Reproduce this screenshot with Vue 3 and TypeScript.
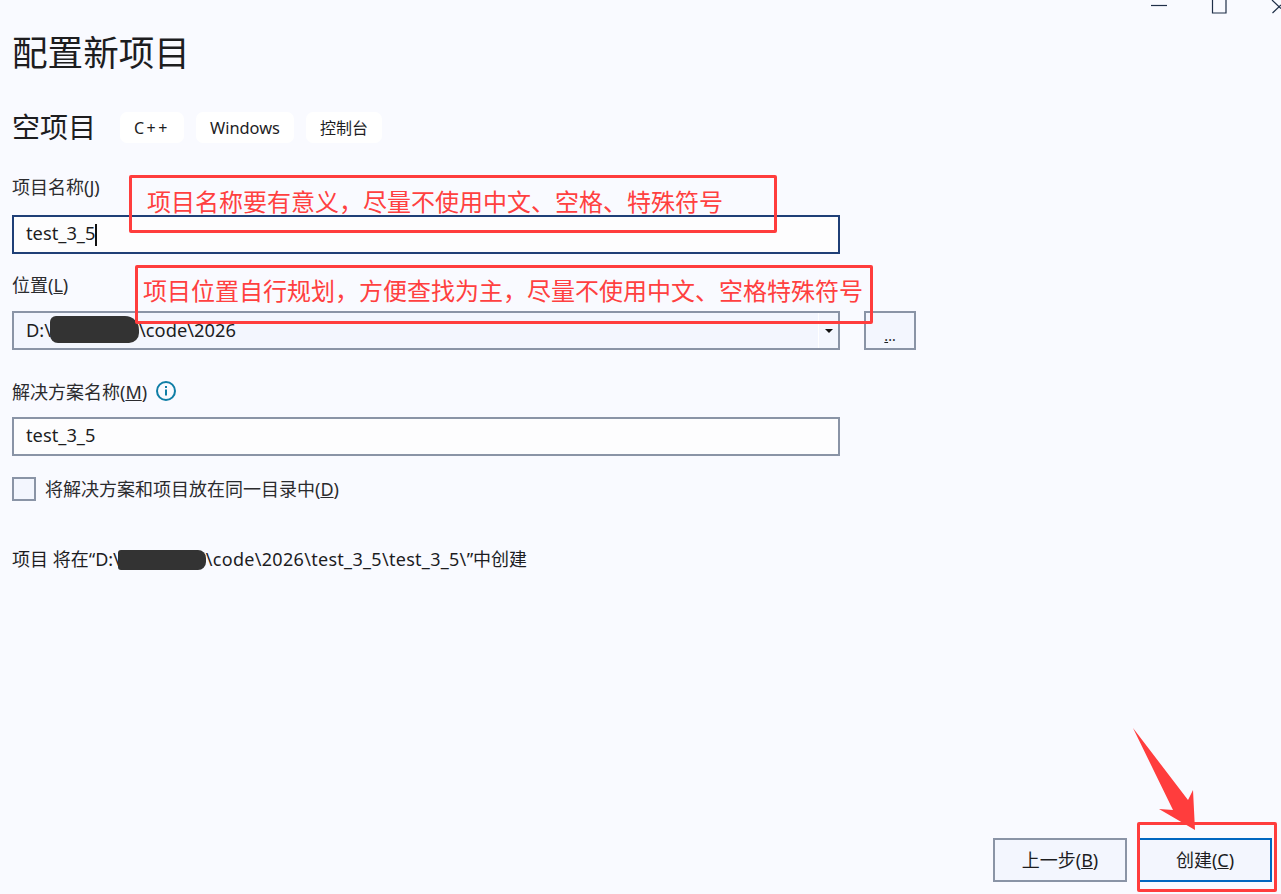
<script setup lang="ts">
const projectName: string = 'test_3_5'
const tags: { text: string; kind: string }[] = [
  { text: 'C++', kind: 'cpp' },
  { text: 'Windows', kind: 'latin' },
  { text: '控制台', kind: 'cjk' },
]
</script>

<template>
  <div class="page">
    <div class="titlebar">
      <svg width="151" height="14" viewBox="0 0 151 14" fill="none" stroke="#1f2f48" stroke-width="1.2">
        <path d="M21 5.500H37" />
        <path d="M82.500 0V13H96V0" />
        <path d="M142 0L151 8.500M151 5L142.500 13" />
      </svg>
    </div>

    <h1 class="title">配置新项目</h1>

    <div class="head">
      <h2 class="subtitle">空项目</h2>
      <span v-for="t in tags" :key="t.text" class="tag" :class="t.kind">{{ t.text }}</span>
    </div>

    <div class="label l1"><span>项目名称(<u>J</u>)</span></div>
    <div class="input focus"><span class="latin-text">{{ projectName }}</span><i class="caret"></i></div>

    <div class="label l2"><span>位置(<u>L</u>)</span></div>
    <div class="location">
      <div class="select">
        <span class="value latin-text">D:\<span class="hidden-part"></span>\code\2026</span>
        <span class="drop"><i class="tri"></i></span>
      </div>
      <div class="browse"><span><u>.</u>..</span></div>
    </div>

    <div class="label l3">
      <span>解决方案名称(<u>M</u>)</span>
      <svg class="info" width="20" height="20" viewBox="0 0 20 20" fill="none">
        <circle cx="10" cy="10" r="9" stroke="#0f7ea6" stroke-width="2" />
        <rect x="9" y="8.500" width="2" height="6" fill="#0f7ea6" />
        <rect x="9" y="5" width="2" height="2" fill="#0f7ea6" />
      </svg>
    </div>
    <div class="input plain"><span class="latin-text">{{ projectName }}</span></div>

    <div class="check-row">
      <span class="box"></span>
      <span>将解决方案和项目放在同一目录中(<u>D</u>)</span>
    </div>

    <div class="summary">项目 将在“D:\<span class="hidden-part short"></span><span class="path">\code\2026\test_3_5\test_3_5\</span>”中创建</div>

    <div class="footer">
      <button class="btn" type="button">上一步(<u>B</u>)</button>
      <button class="btn primary" type="button">创建(<u>C</u>)</button>
    </div>

    <div class="note n1"><span>项目名称要有意义，尽量不使用中文、空格、特殊符号</span></div>
    <div class="note n2"><span>项目位置自行规划，方便查找为主，尽量不使用中文、空格特殊符号</span></div>
    <div class="note n3"></div>
    <svg class="arrow" width="70" height="110" viewBox="1130 725 70 110">
      <path d="M1133 728L1188 800L1193 790L1195 830L1159 809L1173 810Z" fill="#ff3d3d" />
    </svg>
  </div>
</template>

<style scoped>
.page {
  position: relative;
  width: 1281px;
  height: 894px;
  overflow: hidden;
  box-sizing: border-box;
  padding-left: 12px;
  display: flex;
  flex-direction: column;
  background: #f9faff;
  color: #1d1d1f;
  font-family: "Noto Sans", "Noto Sans CJK SC", sans-serif;
  font-size: 18px;
}
.titlebar {
  height: 14px;
  display: flex;
  justify-content: flex-end;
}
.titlebar svg { display: block; }
.title {
  margin: 17px 0 0;
  height: 42px;
  line-height: 42px;
  font-size: 35.600px;
  font-weight: 400;
}
.head {
  margin-top: 39px;
  height: 31px;
  display: flex;
  align-items: center;
}
.subtitle {
  margin: 0 24px 0 0;
  font-size: 28px;
  font-weight: 400;
  line-height: 31px;
  width: 84px;
}
.tag {
  height: 31px;
  box-sizing: border-box;
  padding: 1px 14px 0;
  line-height: 30px;
  margin-right: 12px;
  background: #fff;
  border-radius: 7px;
  font-size: 16px;
}
.tag.latin { font-size: 16.400px; }
.tag.cpp { letter-spacing: 2.500px; }
.label {
  height: 26px;
  line-height: 26px;
  color: #2b2b2e;
  display: flex;
  align-items: center;
  font-size: 18px;
}
.l1 { margin-top: 31px; }
.l2 { margin-top: 18px; }
.l3 { margin-top: 29px; }
.info { margin: -2px 0 0 9px; }
.latin-text { font-size: 18.300px; }
.input {
  width: 828px;
  height: 39px;
  box-sizing: border-box;
  display: flex;
  align-items: center;
  padding: 0 0 5px 12px;
  background: #fdfdfe;
  border: 2px solid #8a94a6;
}
.input.focus {
  margin-top: 15px;
  border-color: #1f3f77;
}
.input.plain { margin-top: 12px; }
.caret {
  width: 2px;
  height: 22px;
  margin-top: 5px;
  background: #111;
}
.location {
  margin-top: 13px;
  display: flex;
  gap: 24px;
}
.select {
  width: 828px;
  height: 39px;
  box-sizing: border-box;
  display: flex;
  align-items: center;
  justify-content: space-between;
  padding-left: 12px;
  background: #f3f6fe;
  border: 2px solid #8a94a6;
}
.value {
  display: flex;
  align-items: center;
  padding-bottom: 3px;
}
.hidden-part {
  display: inline-block;
  width: 89px;
  height: 27px;
  margin-left: -1px;
  background: #333;
  border-radius: 6px 14px 10px 8px;
}
.hidden-part.short {
  width: 88px;
  height: 20px;
  margin: 0 0 0 -2px;
  vertical-align: -4px;
  border-radius: 3px 8px 8px 3px;
}
.drop {
  width: 19px;
  height: 100%;
  display: flex;
  align-items: center;
  justify-content: center;
  border-left: 1px solid #fff;
}
.tri {
  width: 0;
  height: 0;
  border: 4px solid transparent;
  border-top: 4px solid #111;
  border-bottom: 0;
}
.browse {
  width: 52px;
  height: 39px;
  box-sizing: border-box;
  display: flex;
  align-items: flex-end;
  justify-content: center;
  padding-bottom: 2px;
  background: #f3f6fe;
  border: 2px solid #8a94a6;
  font-size: 14px;
  line-height: 20px;
}
.check-row {
  margin-top: 21px;
  height: 24px;
  display: flex;
  align-items: center;
  gap: 9px;
  font-size: 18px;
  line-height: 22px;
  color: #2b2b2e;
}
.box {
  width: 24px;
  height: 24px;
  box-sizing: border-box;
  background: #f3f6fe;
  border: 2px solid #8a94a6;
}
.summary {
  margin-top: 45px;
  height: 26px;
  line-height: 26px;
  font-size: 18px;
  white-space: pre;
}
.path { letter-spacing: 0.300px; }
.footer {
  margin-top: auto;
  margin-bottom: 12px;
  padding-right: 9px;
  display: flex;
  justify-content: flex-end;
  gap: 11px;
}
.btn {
  width: 134px;
  height: 44px;
  box-sizing: border-box;
  padding: 0 0 2px;
  background: #f3f6fe;
  border: 2px solid #8a94a6;
  color: #1d1d1f;
  font: inherit;
  font-size: 18px;
}
.btn.primary { border-color: #0067c0; }
.note {
  position: absolute;
  box-sizing: border-box;
  border: 3px solid #ff3d3d;
  border-radius: 2px;
  display: flex;
  align-items: center;
  color: #ff4040;
  font-size: 24px;
  white-space: nowrap;
}
.n1 {
  left: 129px;
  top: 175px;
  width: 648px;
  height: 58px;
  padding: 0 0 8px 15px;
}
.n2 {
  left: 135px;
  top: 265px;
  width: 738px;
  height: 59px;
  padding: 0 0 10px 5px;
}
.n3 {
  left: 1137px;
  top: 822px;
  width: 140px;
  height: 70px;
}
.arrow {
  position: absolute;
  left: 1130px;
  top: 725px;
}
</style>
